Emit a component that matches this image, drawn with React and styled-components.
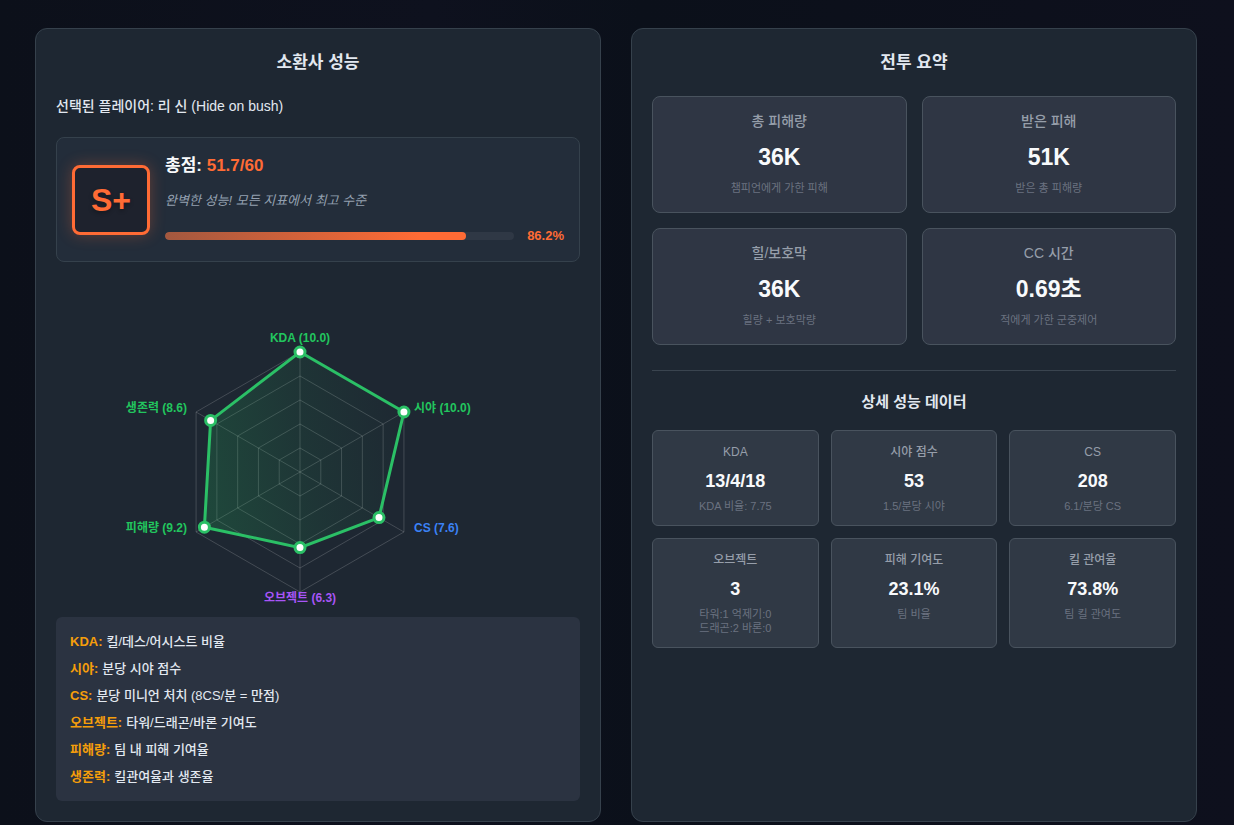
import styled, { createGlobalStyle } from "styled-components";

const GlobalStyle = createGlobalStyle`
  * {
    box-sizing: border-box;
  }

  body {
    margin: 0;
    color: #e2e8f0;
    background: #0c0f1a linear-gradient(90deg, #0c101a 0%, #0e111e 35%, #0b101a 52%, #0e101d 100%);
    font-family: "Liberation Sans", Arial, "Noto Sans CJK KR", sans-serif;
  }
`;

const Page = styled.main`
  display: grid;
  grid-template-columns: repeat(2, minmax(0, 1fr));
  gap: 30px;
  padding: 28px 37px 3px 35px;
`;

const Panel = styled.section`
  padding: 20px;
  background: #1e2732;
  border: 1px solid #36414c;
  border-radius: 12px;
`;

const PanelTitle = styled.h2`
  margin: 0 0 20px;
  font-size: 17px;
  line-height: 27px;
  font-weight: 700;
  text-align: center;
`;

const PlayerName = styled.p`
  margin: 0 0 20px;
  font-size: 14px;
  line-height: 21px;
  font-weight: 500;
`;

const ScoreCard = styled.div`
  display: flex;
  align-items: center;
  gap: 15px;
  padding: 15px;
  background: #232d3a;
  border: 1px solid #35414c;
  border-radius: 8px;
`;

const Grade = styled.div`
  padding: 14px 16px;
  color: #ff6b35;
  background: #1e222d;
  border: 3px solid #ff6b35;
  border-radius: 8px;
  box-shadow: 0 0 15px rgba(255, 107, 53, 0.3);
  font-size: 32px;
  line-height: 36px;
  font-weight: 700;
  text-shadow: 0 2px 4px rgba(0, 0, 0, 0.3);
`;

const ScoreInfo = styled.div`
  flex: 1;
`;

const ScoreTotal = styled.div`
  margin-bottom: 12px;
  color: #f8fafc;
  font-size: 17px;
  line-height: 26px;
  font-weight: 700;

  span {
    color: #ff6b35;
  }
`;

const ScoreText = styled.p`
  margin: 0 0 15px;
  color: #94a0b0;
  font-size: 13px;
  line-height: 20px;
  font-style: italic;
`;

const ProgressRow = styled.div`
  display: flex;
  align-items: center;
  gap: 13px;
  color: #ff6b35;
  font-size: 13px;
  line-height: 20px;
  font-weight: 700;
`;

const Track = styled.div`
  flex: 1;
  height: 8px;
  overflow: hidden;
  background: #2f3845;
  border-radius: 4px;
`;

const Fill = styled.div`
  height: 100%;
  background: linear-gradient(90deg, #a3583f, #ff6b35 85%);
  border-radius: 4px;
`;

const Chart = styled.svg`
  display: block;
  margin: 0 auto;
  max-width: 100%;
  overflow: visible;
  font-size: 12px;
  font-weight: 700;
`;

const Legend = styled.dl`
  display: grid;
  gap: 6px;
  margin: 0;
  padding: 14px;
  background: #2b3341;
  border-radius: 6px;
  font-size: 13px;
  line-height: 21px;
  font-weight: 500;
`;

const LegendItem = styled.div`
  display: flex;
  gap: 4px;

  dt {
    color: #f59e0b;
    font-weight: 700;
  }

  dd {
    margin: 0;
  }
`;

const SummaryGrid = styled.div`
  display: grid;
  grid-template-columns: repeat(2, minmax(0, 1fr));
  gap: 15px;
`;

const DetailGrid = styled.div`
  display: grid;
  grid-template-columns: repeat(3, minmax(0, 1fr));
  gap: 12px;
`;

const StatCard = styled.div`
  padding: ${(props) => (props.$small ? "12px" : "15px")};
  background: ${(props) => (props.$small ? "#303945" : "#2f3644")};
  border: 1px solid #49535e;
  border-radius: ${(props) => (props.$small ? "6px" : "8px")};
  text-align: center;
`;

const StatLabel = styled.div`
  margin-bottom: ${(props) => (props.$small ? "8px" : "11px")};
  color: #969eaa;
  font-size: ${(props) => (props.$small ? "12px" : "14px")};
  line-height: ${(props) => (props.$small ? "18px" : "19px")};
  font-weight: 500;
`;

const StatValue = styled.div`
  margin-bottom: ${(props) => (props.$small ? "6px" : "7px")};
  color: #f8fafc;
  font-size: ${(props) => (props.$small ? "18px" : "23px")};
  line-height: ${(props) => (props.$small ? "24px" : "30px")};
  font-weight: 700;
`;

const StatNote = styled.div`
  color: #6b7280;
  font-size: 11px;
  line-height: ${(props) => (props.$small ? "14px" : "18px")};
  white-space: pre-line;
`;

const Details = styled.div`
  margin-top: 25px;
  padding-top: 20px;
  border-top: 1px solid #3a444f;
`;

const DetailTitle = styled.h3`
  margin: 0 0 17px;
  font-size: 15px;
  line-height: 22px;
  font-weight: 700;
  text-align: center;
`;

const CX = 182;
const CY = 210;
const RADIUS = 120;

const axes = [
  { name: "KDA", score: 10, color: "#22c55e", x: 182, y: 80, anchor: "middle" },
  { name: "시야", score: 10, color: "#22c55e", x: 296, y: 150, anchor: "start" },
  { name: "CS", score: 7.6, color: "#3b82f6", x: 296, y: 270, anchor: "start" },
  { name: "오브젝트", score: 6.3, color: "#a855f7", x: 182, y: 340, anchor: "middle" },
  { name: "피해량", score: 9.2, color: "#22c55e", x: 69, y: 270, anchor: "end" },
  { name: "생존력", score: 8.6, color: "#22c55e", x: 69, y: 150, anchor: "end" },
];

const legend = [
  ["KDA", "킬/데스/어시스트 비율"],
  ["시야", "분당 시야 점수"],
  ["CS", "분당 미니언 처치 (8CS/분 = 만점)"],
  ["오브젝트", "타워/드래곤/바론 기여도"],
  ["피해량", "팀 내 피해 기여율"],
  ["생존력", "킬관여율과 생존율"],
];

const summary = [
  { label: "총 피해량", value: "36K", note: "챔피언에게 가한 피해" },
  { label: "받은 피해", value: "51K", note: "받은 총 피해량" },
  { label: "힐/보호막", value: "36K", note: "힐량 + 보호막량" },
  { label: "CC 시간", value: "0.69초", note: "적에게 가한 군중제어" },
];

const details = [
  { label: "KDA", value: "13/4/18", note: "KDA 비율: 7.75" },
  { label: "시야 점수", value: "53", note: "1.5/분당 시야" },
  { label: "CS", value: "208", note: "6.1/분당 CS" },
  { label: "오브젝트", value: "3", note: "타워:1 억제기:0\n드래곤:2 바론:0" },
  { label: "피해 기여도", value: "23.1%", note: "팀 비율" },
  { label: "킬 관여율", value: "73.8%", note: "팀 킬 관여도" },
];

const getPoint = (index, score) => {
  const angle = (Math.PI / 3) * index - Math.PI / 2;
  const r = (score / 10) * RADIUS;
  return [CX + r * Math.cos(angle), CY + r * Math.sin(angle)];
};

const toPoints = (scores) => scores.map((score, i) => getPoint(i, score).join(",")).join(" ");

const RadarChart = () => (
  <Chart width="400" height="355" viewBox="0 0 400 355">
    <defs>
      <linearGradient id="radarFill" x1="0" y1="0.6" x2="1" y2="0.4">
        <stop offset="0" stopColor="#22c55e" stopOpacity="0.2" />
        <stop offset="0.5" stopColor="#22c55e" stopOpacity="0.09" />
        <stop offset="1" stopColor="#22c55e" stopOpacity="0.01" />
      </linearGradient>
    </defs>
    <g fill="none" stroke="#ffffff" strokeOpacity="0.17">
      {[2, 4, 6, 8, 10].map((level) => (
        <polygon key={level} points={toPoints(axes.map(() => level))} />
      ))}
      {axes.map((axis, i) => {
        const [x, y] = getPoint(i, 10);
        return <line key={axis.name} x1={CX} y1={CY} x2={x} y2={y} />;
      })}
    </g>
    <polygon
      points={toPoints(axes.map((axis) => axis.score))}
      fill="url(#radarFill)"
      stroke="#2bc066"
      strokeWidth="3"
    />
    {axes.map((axis, i) => {
      const [x, y] = getPoint(i, axis.score);
      return <circle key={axis.name} cx={x} cy={y} r="5" fill="#fff" stroke="#2bc066" strokeWidth="3" />;
    })}
    {axes.map((axis) => (
      <text key={axis.name} x={axis.x} y={axis.y} fill={axis.color} textAnchor={axis.anchor}>
        {`${axis.name} (${axis.score.toFixed(1)})`}
      </text>
    ))}
  </Chart>
);

const Stat = ({ label, value, note, small }) => (
  <StatCard $small={small}>
    <StatLabel $small={small}>{label}</StatLabel>
    <StatValue $small={small}>{value}</StatValue>
    <StatNote $small={small}>{note}</StatNote>
  </StatCard>
);

const App = () => {
  const percent = 86.2;

  return (
    <>
      <GlobalStyle />
      <Page>
        <Panel>
          <PanelTitle>소환사 성능</PanelTitle>
          <PlayerName>선택된 플레이어: 리 신 (Hide on bush)</PlayerName>
          <ScoreCard>
            <Grade>S+</Grade>
            <ScoreInfo>
              <ScoreTotal>
                총점: <span>51.7/60</span>
              </ScoreTotal>
              <ScoreText>완벽한 성능! 모든 지표에서 최고 수준</ScoreText>
              <ProgressRow>
                <Track>
                  <Fill style={{ width: `${percent}%` }} />
                </Track>
                {`${percent}%`}
              </ProgressRow>
            </ScoreInfo>
          </ScoreCard>
          <RadarChart />
          <Legend>
            {legend.map(([term, text]) => (
              <LegendItem key={term}>
                <dt>{term}:</dt>
                <dd>{text}</dd>
              </LegendItem>
            ))}
          </Legend>
        </Panel>

        <Panel>
          <PanelTitle>전투 요약</PanelTitle>
          <SummaryGrid>
            {summary.map((item) => (
              <Stat key={item.label} {...item} />
            ))}
          </SummaryGrid>
          <Details>
            <DetailTitle>상세 성능 데이터</DetailTitle>
            <DetailGrid>
              {details.map((item) => (
                <Stat key={item.label} {...item} small />
              ))}
            </DetailGrid>
          </Details>
        </Panel>
      </Page>
    </>
  );
};

export default App;
